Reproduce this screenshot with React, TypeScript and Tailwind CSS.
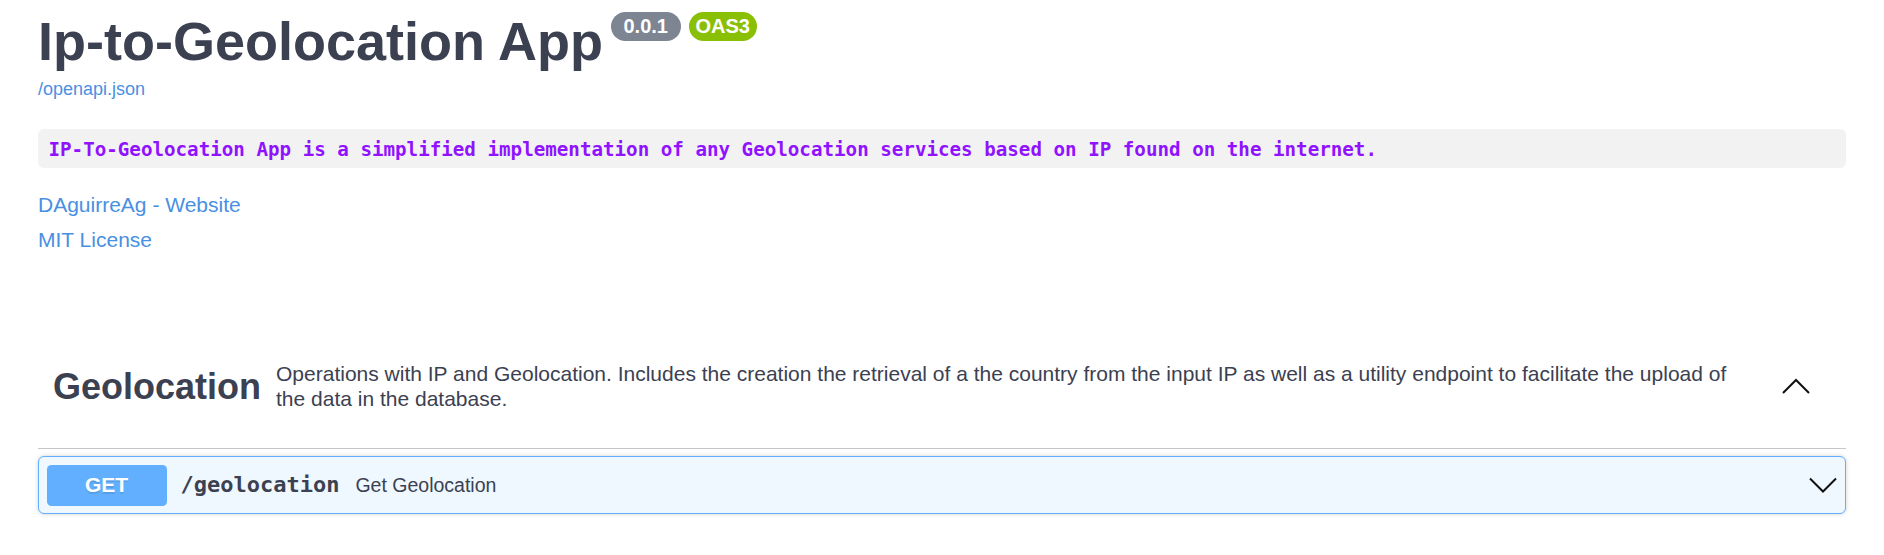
const Chevron = ({ up }: { up?: boolean }) => (
  <svg width="30" height="30" viewBox="0 0 30 30" aria-hidden="true">
    <polyline
      points={up ? "2,21 15,8 28,21" : "2,8.5 15,21.5 28,8.5"}
      fill="none"
      stroke="#111"
      strokeWidth="2"
    />
  </svg>
);

const App = () => {
  return (
    <div className="min-h-[555px] bg-white px-[38px] font-['Liberation_Sans',Arial,sans-serif] text-[#3b4151]">
      {/* info */}
      <div className="flex items-start pt-[10px]">
        <h2 className="text-[54px] font-bold leading-[62px]">
          Ip-to-Geolocation App
        </h2>
        <span className="ml-[8px] mt-[2px] h-[29px] whitespace-pre rounded-full bg-[#7d8492] px-[7px] text-[20px] font-bold leading-[29px] text-white">
          {" 0.0.1 "}
        </span>
        <span className="ml-[8px] mt-[2px] h-[29px] rounded-full bg-[#89bf04] px-[7px] text-[20px] font-bold leading-[29px] text-white">
          OAS3
        </span>
      </div>
      <a className="mt-[7px] block w-fit text-[18px] leading-[21px] text-[#4990e2]">
        /openapi.json
      </a>
      <div className="mt-[29px] rounded-[6px] bg-[#f2f2f2] px-[10.5px] pb-[6px] pt-[10px] font-['DejaVu_Sans_Mono',monospace] text-[19.2px] font-bold leading-[22.5px] text-[#9012fe]">
        IP-To-Geolocation App is a simplified implementation of any
        Geolocation services based on IP found on the internet.
      </div>
      <div className="mt-[19px] text-[21px] leading-[35px] text-[#4990e2]">
        <a className="block w-fit">DAguirreAg - Website</a>
        <a className="block w-fit">MIT License</a>
      </div>

      {/* tag section */}
      <section className="mt-[69px]">
        <h3 className="flex h-[123px] items-center border-b border-[#c4c6cb] pl-[15px] pr-[35px]">
          <span className="text-[36px] font-bold leading-[41px]">Geolocation</span>
          <p className="flex-1 px-[15px] text-[21px] font-normal leading-[24.15px]">
            Operations with IP and Geolocation. Includes the creation the
            retrieval of a the country from the input IP as well as a utility
            endpoint to facilitate the upload of the data in the database.
          </p>
          <button className="pl-[15px]">
            <Chevron up />
          </button>
        </h3>

        <div className="mt-[7.5px] rounded-[6px] border border-[#61affe] bg-[#eff7ff] shadow-[0_0_4.5px_rgba(0,0,0,0.19)]">
          <div className="flex items-center p-[7.5px]">
            <span className="flex h-[41px] w-[120px] items-center justify-center rounded-[4.5px] bg-[#61affe] text-[21px] font-bold leading-[24px] text-white [text-shadow:0_1.5px_0_rgba(0,0,0,0.1)]">
              GET
            </span>
            <span className="pl-[14px] pr-[16px] font-['DejaVu_Sans_Mono',monospace] text-[22px] font-bold leading-[26px]">
              /geolocation
            </span>
            <span className="text-[19.5px] leading-[22px]">Get Geolocation</span>
            <span className="ml-auto">
              <Chevron />
            </span>
          </div>
        </div>
      </section>
    </div>
  );
};

export default App;
